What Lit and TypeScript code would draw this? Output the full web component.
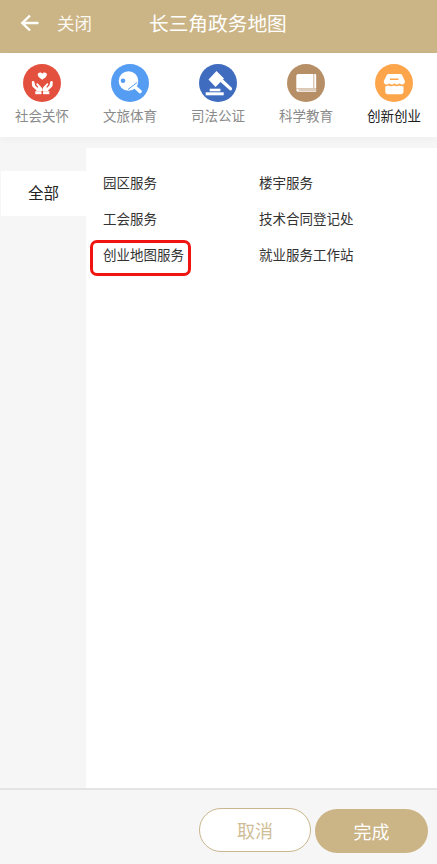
import { LitElement, html, css, svg } from "lit";
import { customElement } from "lit/decorators.js";

const icons = [
  { label: "社会关怀", bg: "#e4503e", art: svg`
    <path d="M19.300 9.800c-1.100-2.200-4.600-1.700-4.600 1 0 1.900 2.400 3.500 4.600 5 2.200-1.500 4.600-3.100 4.600-5 0-2.700-3.500-3.200-4.600-1z" fill="#fff"/>
    <g fill="#fff">
      <path d="M8.800 18.300c0-1.500 2.200-1.900 2.600-.3l.8 3.500 2.300 2.300.8-.8-1.800-2.200c-.7-1 .5-1.900 1.300-1.200l2.900 3c1 1 1.500 2 1.500 3.400v.9h-5.700v-.5l-3.600-3.400c-.6-.6-.9-1.300-.9-2.100z"/>
      <path d="M29.800 18.300c0-1.500-2.200-1.900-2.600-.3l-.8 3.500-2.300 2.300-.8-.8 1.800-2.200c.7-1-.5-1.900-1.300-1.200l-2.900 3c-1 1-1.500 2-1.500 3.400v.9h5.700v-.5l3.600-3.400c.6-.6.9-1.300.9-2.100z"/>
      <rect x="12.300" y="27.200" width="6.200" height="3"/>
      <rect x="20.100" y="27.200" width="6.200" height="3"/>
    </g>` },
  { label: "文旅体育", bg: "#559cf3", art: svg`
    <circle cx="17.500" cy="17" r="9.800" fill="#fff"/>
    <path d="M23.500 22.500l5.500 5" stroke="#fff" stroke-width="3.600" stroke-linecap="round"/>
    <circle cx="12" cy="16.800" r="2.300" fill="#559cf3"/>
    <path d="M17 25.500l9-7" stroke="#559cf3" stroke-width="1"/>` },
  { label: "司法公证", bg: "#3f6cbf", art: svg`
    <g fill="#fff">
      <path d="M9.500 15.500l8-8.500 7.500 7.500-8.500 8.500z"/>
      <path d="M21 17.500l2.500-2.500 9 8.500c.8.800.8 1.700.1 2.400-.7.700-1.600.7-2.400-.1z"/>
      <rect x="10.700" y="24.700" width="10.700" height="2.600"/>
      <rect x="6.700" y="28.300" width="18" height="3"/>
    </g>` },
  { label: "科学教育", bg: "#b78f67", art: svg`
    <path d="M11.300 10H28c.7 0 1.200.5 1.200 1.200V24H11.500c-.9 0-1.700.3-2.200.8V12c0-1.100.9-2 2-2z" fill="#fff"/>
    <path d="M9.300 26.200c0-1 .9-1.700 2.100-1.700h17.800v3.200H11.400c-1.200 0-2.100-.6-2.100-1.500z" fill="#fff"/>
    <path d="M11.500 26h17.700" stroke="#b78f67" stroke-width=".9"/>
    <path d="M26.800 10v14" stroke="#b78f67" stroke-width=".7"/>` },
  { label: "创新创业", bg: "#fda54b", active: true, art: svg`
    <path d="M13.500 10h11.500c1 0 1.800.5 2.200 1.300l2.500 5.200c.8 2-.6 4-2.500 4-1.100 0-2.100-.5-2.700-1.300-.6.800-1.600 1.300-2.700 1.300-1 0-1.900-.5-2.500-1.300-.6.800-1.500 1.300-2.500 1.300-1.100 0-2-.5-2.700-1.300-.6.800-1.500 1.300-2.600 1.300-1.900 0-3.300-2-2.500-4l2.700-5.200c.4-.8 1.200-1.300 2.300-1.300z" fill="#fff"/>
    <path d="M10.300 22.200c1.300.1 2.400-.2 3.200-.7.800.5 1.700.8 2.700.8 1 0 2-.3 2.700-.8.800.5 1.700.8 2.700.8 1 0 1.900-.3 2.700-.8.900.6 2.300.9 4.200.7v5.600c0 1.400-1.100 2.500-2.500 2.500H12.800c-1.400 0-2.500-1.100-2.500-2.500z" fill="#fff"/>
    <rect x="15" y="14.500" width="8.500" height="1.500" fill="#fda54b"/>` },
];

@customElement("app-root")
export class AppRoot extends LitElement {
  static styles = css`
    :host {
      display: flex;
      flex-direction: column;
      width: 437px;
      height: 864px;
      overflow: hidden;
      background: #f6f6f6;
      font-family: "Noto Sans CJK SC", "Liberation Sans", sans-serif;
    }
    .bar {
      flex: none;
      height: 53px;
      background: #cbb485;
      color: #fff;
      display: flex;
      align-items: center;
      padding: 0 0 7px 20px;
      box-sizing: border-box;
    }
    .back { width: 19px; height: 18px; flex: none; margin-top: -1px; }
    .close { margin-left: 18px; font-size: 17.500px; margin-top: -2px; width: 36px; color: #fbf8f1; white-space: nowrap; }
    .title { margin-left: 56px; font-size: 19.700px; margin-top: -2px; white-space: nowrap; }
    .tabs {
      flex: none;
      height: 84px;
      background: #fff;
      display: flex;
      margin-left: -2px;
      box-shadow: 0 3px 8px rgba(0, 0, 0, 0.03);
      position: relative;
      z-index: 1;
    }
    .tab {
      width: 88px;
      flex: none;
      display: flex;
      flex-direction: column;
      align-items: center;
      padding-top: 11px;
      box-sizing: border-box;
      font-size: 13.500px;
      line-height: 18px;
      color: #8a8a8a;
      gap: 4px;
    }
    .tab.active { color: #1c1c1c; }
    .tab svg { width: 38px; height: 38px; display: block; }
    .body {
      flex: 1;
      min-height: 0;
      display: flex;
      padding-top: 11px;
    }
    .side { width: 86px; flex: none; padding-top: 23px; box-sizing: border-box; }
    .side-item {
      margin-left: 1px;
      height: 45px;
      background: #fff;
      display: flex;
      align-items: center;
      justify-content: center;
      font-size: 15.500px;
      color: #222;
      padding-bottom: 4px;
      box-sizing: border-box;
    }
    .list {
      flex: 1;
      background: #fff;
      display: grid;
      grid-template-columns: 156px 1fr;
      grid-auto-rows: 36px;
      align-content: start;
      padding: 16px 0 0 17px;
      font-size: 13.500px;
      color: #333;
    }
    .cell { line-height: 36px; white-space: nowrap; position: relative; }
    .mark {
      position: absolute;
      left: -13px;
      top: 4px;
      width: 101px;
      height: 36px;
      box-sizing: border-box;
      border: 3.500px solid #f0130f;
      border-radius: 7px;
    }
    .foot {
      flex: none;
      height: 76px;
      border-top: 2px solid #e4e4e4;
      box-sizing: border-box;
      display: flex;
      justify-content: flex-end;
      align-items: flex-start;
      gap: 4px;
      padding: 18px 9px 0 0;
    }
    .btn {
      height: 44px;
      border-radius: 22px;
      box-sizing: border-box;
      display: flex;
      align-items: center;
      justify-content: center;
      font-size: 18px;
    }
    .cancel { width: 112px; background: #fff; border: 1px solid #c9b68e; color: #cfbd97; }
    .done { width: 113px; margin-top: 1px; background: #cbb485; color: #fff; }
  `;

  render() {
    return html`
      <div class="bar">
        <svg class="back" viewBox="0 0 19 18" fill="none" stroke="#fff" stroke-width="2.400">
          <path d="M18.500 9H2.500M10 1.500L2.300 9l7.700 7.500"/>
        </svg>
        <span class="close">关闭</span>
        <span class="title">长三角政务地图</span>
      </div>
      <div class="tabs">
        ${icons.map(i => html`
          <div class="tab ${i.active ? "active" : ""}">
            <svg viewBox="0 0 38 38"><circle cx="19" cy="19" r="19" fill=${i.bg}></circle>${i.art}</svg>
            <span>${i.label}</span>
          </div>`)}
      </div>
      <div class="body">
        <div class="side"><div class="side-item">全部</div></div>
        <div class="list">
          <div class="cell">园区服务</div>
          <div class="cell">楼宇服务</div>
          <div class="cell">工会服务</div>
          <div class="cell">技术合同登记处</div>
          <div class="cell">创业地图服务<div class="mark"></div></div>
          <div class="cell">就业服务工作站</div>
        </div>
      </div>
      <div class="foot">
        <div class="btn cancel">取消</div>
        <div class="btn done">完成</div>
      </div>
    `;
  }
}
